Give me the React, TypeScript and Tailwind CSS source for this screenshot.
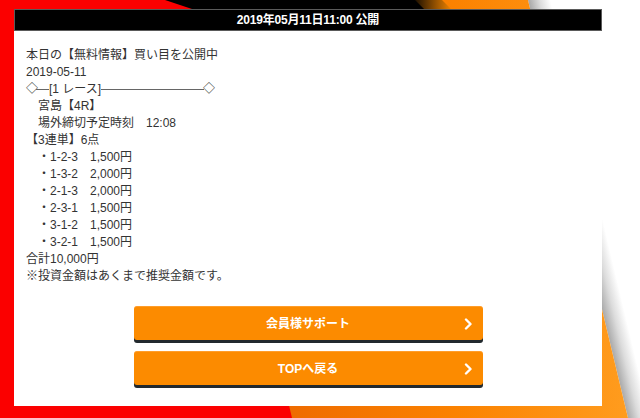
import React from "react";

const lines: string[] = [
  "本日の【無料情報】買い目を公開中",
  "2019-05-11",
];

const lines2: string[] = [
  "\u3000宮島【4R】",
  "\u3000場外締切予定時刻\u300012:08",
  "【3連単】6点",
  "\u3000・1-2-3\u30001,500円",
  "\u3000・1-3-2\u30002,000円",
  "\u3000・2-1-3\u30002,000円",
  "\u3000・2-3-1\u30001,500円",
  "\u3000・3-1-2\u30001,500円",
  "\u3000・3-2-1\u30001,500円",
  "合計10,000円",
  "※投資金額はあくまで推奨金額です。",
];

function Chevron() {
  return (
    <svg width="10" height="12" viewBox="0 0 10 12" fill="none">
      <path d="M3 1.5 L7.5 6 L3 10.5" stroke="white" strokeWidth="2.4" strokeLinecap="round" strokeLinejoin="round" />
    </svg>
  );
}

function Button({ label }: { label: string }) {
  return (
    <div className="relative w-[349px] h-[34px] rounded-[3px] bg-[#fc8b00] shadow-[0_3px_0_#22292e] flex items-center justify-center border-t border-[#ff9d2a]">
      <span className="text-white text-[12px] font-bold leading-none">{label}</span>
      <span className="absolute right-[10px] top-[11px]">
        <Chevron />
      </span>
    </div>
  );
}

export default function App() {
  return (
    <div
      className="relative w-[640px] h-[418px] overflow-hidden bg-white"
      style={{ fontFamily: '"Liberation Sans", "Noto Sans CJK JP", sans-serif' }}
    >
      <svg className="absolute inset-0" width="640" height="418" viewBox="0 0 640 418">
        <defs>
          <linearGradient id="sh" gradientUnits="userSpaceOnUse" x1="578" y1="209" x2="599" y2="204">
            <stop offset="0" stopColor="#a9a9a9" />
            <stop offset="0.5" stopColor="#dcdcdc" />
            <stop offset="1" stopColor="#ffffff" />
          </linearGradient>
          <linearGradient id="og" x1="0" y1="0" x2="1" y2="0">
            <stop offset="0" stopColor="#ee6a00" />
            <stop offset="0.5" stopColor="#fb8200" />
            <stop offset="1" stopColor="#ff9c1e" />
          </linearGradient>
          <linearGradient id="hatch" x1="0" y1="0" x2="1" y2="0">
            <stop offset="0" stopColor="#000000" />
            <stop offset="1" stopColor="#ff8c00" />
          </linearGradient>
        </defs>
        <rect width="640" height="418" fill="#ffffff" />
        <polygon points="528,0 552,0 652,418 628,418" fill="url(#sh)" />
        <polygon points="300,0 528,0 628,418 280,418" fill="url(#og)" />
        <polygon points="410,0 442,0 454,12 422,12" fill="url(#hatch)" />
        <polygon points="160,0 415,0 427,12 190,12" fill="#000000" />
        <polygon points="0,0 165,0 195,10 292,418 0,418" fill="#fb0000" />
      </svg>

      <div className="relative ml-[14px] mt-[9px] w-[588px] h-[397px] bg-white flex flex-col">
        <div className="h-[22px] bg-black border border-[#5a5a5a] flex items-center justify-center">
          <span className="text-white text-[12px] font-bold leading-none tracking-[-0.2px]">
            2019年05月11日11:00 公開
          </span>
        </div>

        <div className="pl-[12px] pt-[16px] text-[12px] leading-[17px] text-[#333333]">
          {lines.map((l, i) => (
            <div key={i} className="whitespace-pre h-[17px]">{l}</div>
          ))}
          <div className="h-[17px] flex items-center">
            <span>◇</span>
            <div className="w-[13px] h-px bg-[#666666] -ml-[2px]" />
            <span className="whitespace-pre">[1 レース]</span>
            <div className="w-[103px] h-px bg-[#666666]" />
            <span className="-ml-[1px]">◇</span>
          </div>
          {lines2.map((l, i) => (
            <div key={i} className="whitespace-pre h-[17px]">{l}</div>
          ))}
        </div>

        <div className="mt-[21px] flex flex-col items-center gap-[11px]">
          <Button label="会員様サポート" />
          <Button label="TOPへ戻る" />
        </div>
      </div>
    </div>
  );
}
